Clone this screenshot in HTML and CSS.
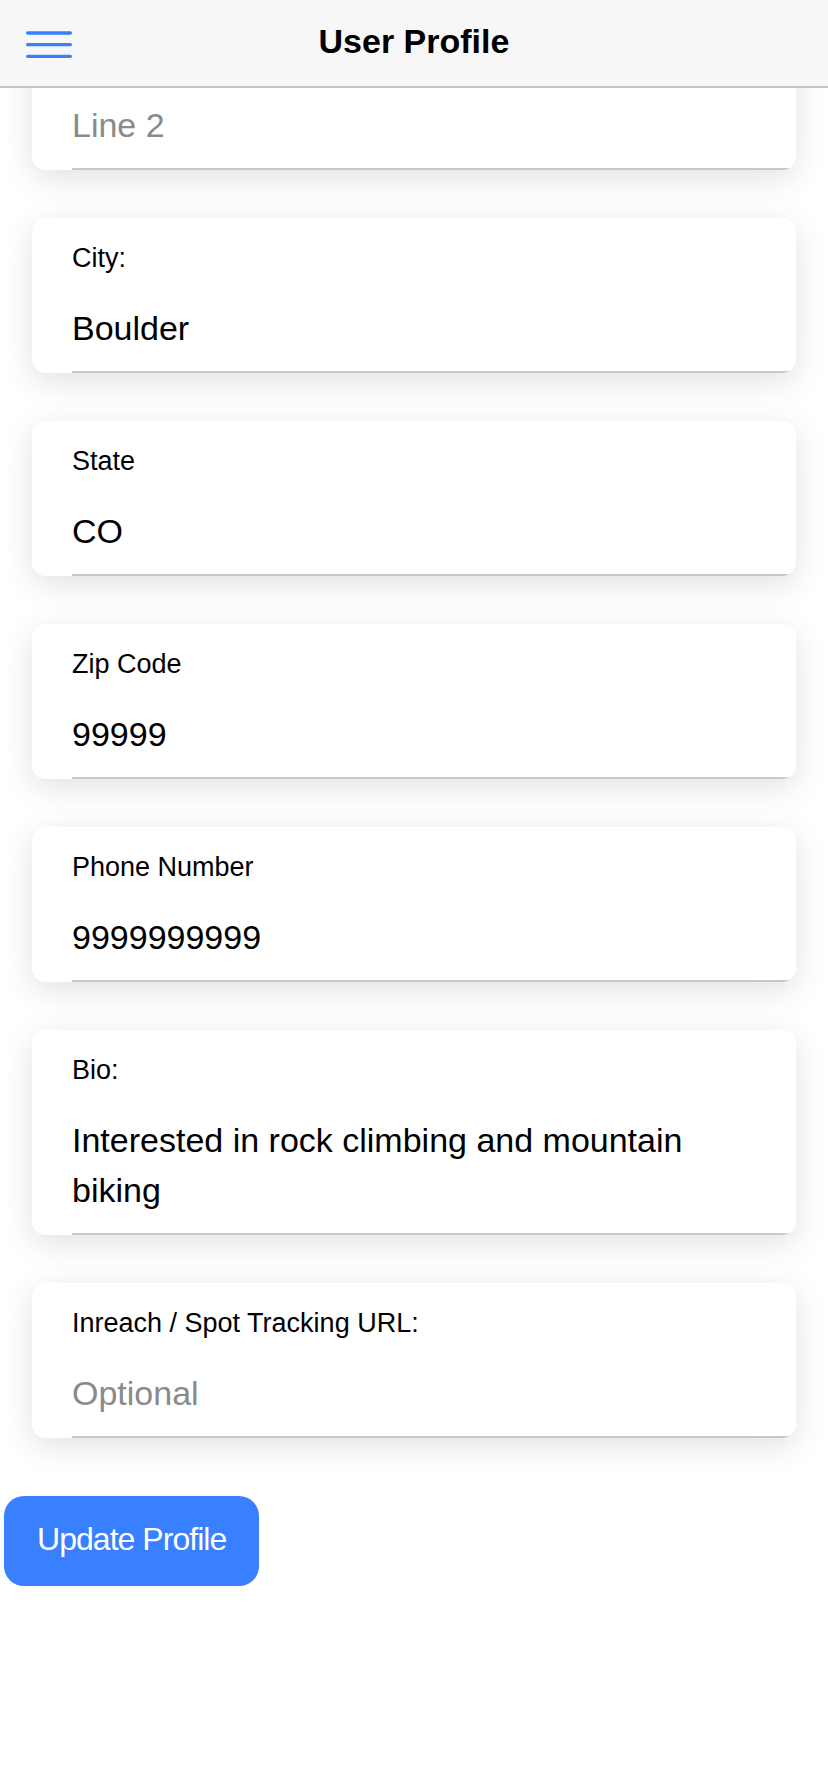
FILE: index.html
```html
<!DOCTYPE html>
<html lang="en">
<head>
<meta charset="utf-8">
<title>User Profile</title>
<link rel="stylesheet" href="styles.css">
</head>
<body>
<header class="toolbar">
  <div class="menu-btn">
    <svg class="menu-icon" width="46" height="28" viewBox="0 0 46 28" aria-hidden="true">
      <line x1="1.65" y1="2" x2="44.35" y2="2"/>
      <line x1="1.65" y1="13.7" x2="44.35" y2="13.7"/>
      <line x1="1.65" y1="25.3" x2="44.35" y2="25.3"/>
    </svg>
  </div>
  <h1 class="title">User Profile</h1>
  <div></div>
</header>

<main class="content">
  <section class="card">
    <div class="item"><div class="item-inner">
      <div class="field-label">Address Line 2:</div>
      <div class="field-value placeholder">Line 2</div>
    </div></div>
  </section>

  <section class="card">
    <div class="item"><div class="item-inner">
      <div class="field-label">City:</div>
      <div class="field-value">Boulder</div>
    </div></div>
  </section>

  <section class="card">
    <div class="item"><div class="item-inner">
      <div class="field-label">State</div>
      <div class="field-value">CO</div>
    </div></div>
  </section>

  <section class="card">
    <div class="item"><div class="item-inner">
      <div class="field-label">Zip Code</div>
      <div class="field-value">99999</div>
    </div></div>
  </section>

  <section class="card">
    <div class="item"><div class="item-inner">
      <div class="field-label">Phone Number</div>
      <div class="field-value">9999999999</div>
    </div></div>
  </section>

  <section class="card">
    <div class="item"><div class="item-inner">
      <div class="field-label">Bio:</div>
      <div class="field-value multi">Interested in rock climbing and mountain biking</div>
    </div></div>
  </section>

  <section class="card">
    <div class="item"><div class="item-inner">
      <div class="field-label">Inreach / Spot Tracking URL:</div>
      <div class="field-value placeholder">Optional</div>
    </div></div>
  </section>

  <button class="btn-primary" type="button">Update Profile</button>
</main>
</body>
</html>
```

FILE: styles.css
```css
* { box-sizing: border-box; }

html, body {
  margin: 0;
  padding: 0;
  background: #ffffff;
}

body {
  font-family: "Liberation Sans", Arial, sans-serif;
  color: #000000;
}

.toolbar {
  position: fixed;
  top: 0;
  left: 0;
  right: 0;
  height: 88px;
  background: #f7f7f7;
  border-bottom: 2px solid #c6c6c6;
  display: grid;
  grid-template-columns: 1fr auto 1fr;
  align-items: start;
  z-index: 10;
}

.menu-btn {
  padding: 31px 0 0 26px;
}

.menu-icon {
  display: block;
  stroke: #3880ff;
  stroke-width: 3.3;
  stroke-linecap: round;
  fill: none;
}

.title {
  margin: 21px 0 0;
  font-size: 34px;
  line-height: 40px;
  font-weight: 700;
  text-align: center;
  white-space: nowrap;
}

.content {
  padding: 15px 0 0;
}

.card {
  margin: 0 32px 48px;
  background: #ffffff;
  border-radius: 14px;
  box-shadow: 0 8px 32px rgba(0, 0, 0, 0.12);
  overflow: hidden;
}

.card:last-of-type {
  margin-bottom: 58px;
}

.item {
  padding-left: 40px;
}

.item-inner {
  padding: 24px 32px 23px 0;
  border-bottom: 2px solid #c8c7cc;
}

.field-label {
  font-size: 27px;
  line-height: 32px;
}

.field-value {
  margin-top: 34px;
  font-size: 34px;
  line-height: 40px;
}

.field-value.multi {
  line-height: 50px;
  margin-top: 29px;
  margin-bottom: -5px;
}

.placeholder {
  color: #8a8a8a;
}

.btn-primary {
  display: block;
  margin: 0 0 0 4px;
  height: 90px;
  padding: 0 33px 4px;
  border: 0;
  border-radius: 20px;
  background: #3880ff;
  color: #ffffff;
  font-family: "Liberation Sans", Arial, sans-serif;
  font-size: 32px;
  line-height: 86px;
  letter-spacing: -0.03em;
  cursor: pointer;
}
```
